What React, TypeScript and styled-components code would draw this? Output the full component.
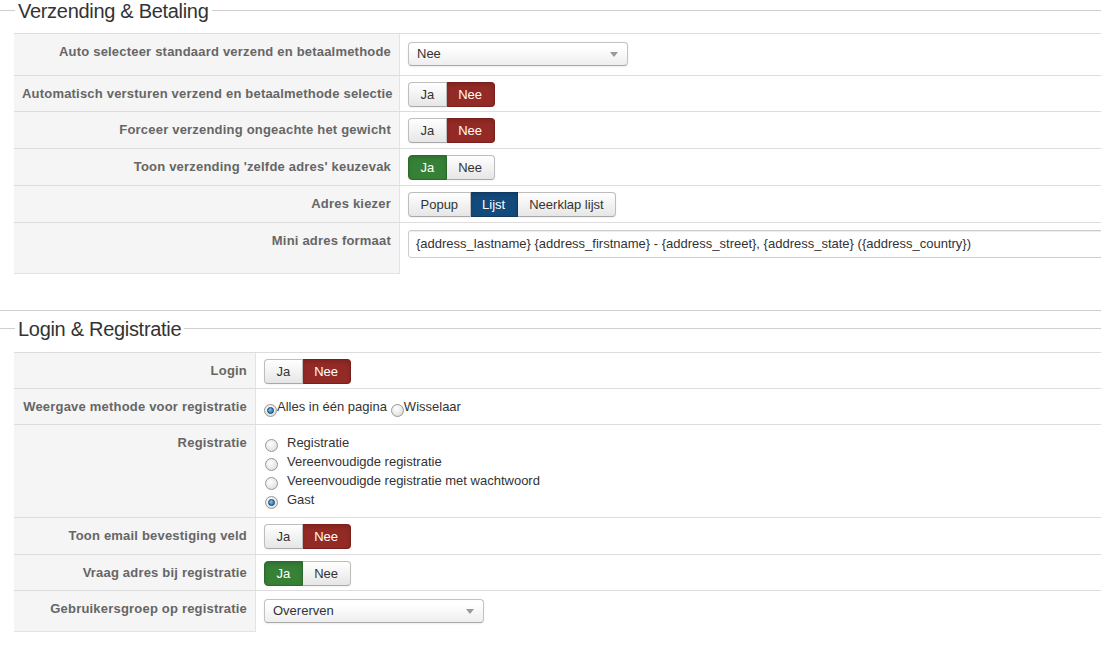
import React from 'react'
import styled, { createGlobalStyle, css } from 'styled-components'

const GlobalStyle = createGlobalStyle`
  html, body {
    margin: 0;
    padding: 0;
    background: #fff;
    overflow: hidden;
  }
  body {
    font-family: "Liberation Sans", Arial, sans-serif;
    font-size: 13px;
    color: #333;
  }
`

type Tone = 'danger' | 'success' | 'primary'

type BtnOpt = { label: string; active?: boolean; tone?: Tone }

const toneColors: Record<Tone, { bg: string; border: string }> = {
  danger: { bg: '#942a25', border: '#7a201c' },
  success: { bg: '#378137', border: '#2b6a2b' },
  primary: { bg: '#134a7c', border: '#0d3a63' },
}

const Page = styled.div`
  width: 100%;
  overflow: hidden;
  padding-bottom: 40px;
`

const Section = styled.section<{ $first?: boolean }>`
  ${(p) =>
    !p.$first &&
    css`
      margin-top: 36px;
      border-top: 1px solid #cfcfcf;
      padding-top: 7px;
    `}
`

const Legend = styled.div`
  display: flex;
  align-items: flex-start;
  height: 22px;
  &::before {
    content: '';
    width: 15px;
    margin-top: 10px;
    border-top: 1px solid #cfcfcf;
  }
  &::after {
    content: '';
    flex: 1;
    margin-top: 10px;
    border-top: 1px solid #cfcfcf;
  }
`

const LegendText = styled.span`
  padding: 1px 3px 0;
  font-size: 20px;
  line-height: 20px;
  letter-spacing: -0.3px;
  color: #333;
  white-space: nowrap;
`

const Table = styled.div<{ $gap?: number }>`
  margin: ${(p) => p.$gap ?? 11}px 0 0 14px;
  width: 1200px;
`

const Label = styled.div<{ $w: number }>`
  width: ${(p) => p.$w}px;
  flex: none;
  box-sizing: border-box;
  padding: 8px 8px 0;
  background: #f5f5f5;
  border-right: 1px solid #e3e3e3;
  text-align: right;
  font-weight: bold;
  font-size: 13px;
  line-height: 20px;
  letter-spacing: 0.2px;
  color: #666;
  white-space: nowrap;
`

const Value = styled.div`
  flex: 1;
  padding: 0 8px;
  min-width: 0;
`

const Row = styled.div`
  display: flex;
  border-top: 1px solid #ddd;
  &:last-child ${Label} {
    border-bottom: 1px solid #e3e3e3;
  }
`

const BtnGroup = styled.div<{ $tight?: boolean }>`
  display: flex;
  margin: 6px 0 ${(p) => (p.$tight ? 4 : 5)}px;
`

const Btn = styled.span<{ $active?: boolean; $tone?: Tone }>`
  display: block;
  height: 25px;
  box-sizing: border-box;
  padding: 0 11.5px;
  line-height: 23px;
  font-size: 13px;
  color: #333;
  border: 1px solid #bdbdbd;
  border-bottom-color: #a8a8a8;
  border-left-width: 0;
  background: linear-gradient(#ffffff, #e6e6e6);
  box-shadow: inset 0 1px 0 rgba(255, 255, 255, 0.4), 0 1px 2px rgba(0, 0, 0, 0.05);
  &:first-child {
    border-left-width: 1px;
    border-radius: 4px 0 0 4px;
  }
  &:last-child {
    border-radius: 0 4px 4px 0;
  }
  ${(p) =>
    p.$active &&
    p.$tone &&
    css`
      color: #fff;
      background: ${toneColors[p.$tone].bg};
      border-color: ${toneColors[p.$tone].border};
      box-shadow: inset 0 2px 4px rgba(0, 0, 0, 0.15);
    `}
`

const Select = styled.div`
  position: relative;
  width: 220px;
  height: 24px;
  box-sizing: border-box;
  margin: 8px 0 9px;
  padding-left: 8px;
  border: 1px solid #c2c2c2;
  border-bottom-color: #a9a9a9;
  border-radius: 4px;
  background: linear-gradient(#ffffff 20%, #eeeeee);
  box-shadow: 0 1px 2px rgba(0, 0, 0, 0.08);
  line-height: 22px;
  font-size: 13px;
  color: #333;
`

const Caret = styled.span`
  position: absolute;
  right: 9px;
  top: 9px;
  width: 0;
  height: 0;
  border-left: 4px solid transparent;
  border-right: 4px solid transparent;
  border-top: 5px solid #999;
`

const TextInput = styled.div`
  width: 760px;
  height: 28px;
  box-sizing: border-box;
  margin: 7px 0 16px;
  padding: 0 7px;
  border: 1px solid #ccc;
  border-radius: 3px;
  box-shadow: inset 0 1px 1px rgba(0, 0, 0, 0.075);
  line-height: 26px;
  font-size: 13px;
  color: #333;
  white-space: nowrap;
`

const RadioDot = styled.span<{ $checked?: boolean }>`
  position: relative;
  display: inline-block;
  width: 11px;
  height: 11px;
  flex: none;
  border: 1px solid #979797;
  border-radius: 50%;
  background: radial-gradient(circle at 40% 35%, #ffffff, #d6d6d6);
  ${(p) =>
    p.$checked &&
    css`
      &::after {
        content: '';
        position: absolute;
        left: 2px;
        top: 2px;
        width: 5px;
        height: 5px;
        border-radius: 50%;
        border: 1px solid #173d5e;
        background: radial-gradient(circle at 40% 35%, #7cc6f0, #11639e);
      }
    `}
`

const RadioInline = styled.div`
  display: flex;
  align-items: center;
  padding: 8px 0 7px;
  line-height: 20px;
  font-size: 13px;
  color: #333;
`

const InlineItem = styled.label`
  display: inline-flex;
  align-items: center;
  & + & {
    margin-left: 4px;
  }
  ${RadioDot} {
    margin-top: 6px;
  }
`

const RadioList = styled.div`
  padding: 8px 0 8px;
`

const ListItem = styled.label`
  display: flex;
  align-items: center;
  height: 19px;
  line-height: 19px;
  font-size: 13px;
  color: #333;
  ${RadioDot} {
    margin: 5px 9px 0 1px;
  }
`

const Toggle = ({ options, tight }: { options: BtnOpt[]; tight?: boolean }) => (
  <BtnGroup $tight={tight}>
    {options.map((o, i) => (
      <Btn key={i} $active={o.active} $tone={o.tone}>
        {o.label}
      </Btn>
    ))}
  </BtnGroup>
)

const Dropdown = ({ value }: { value: string }) => (
  <Select>
    {value}
    <Caret />
  </Select>
)

const ja = (tone: Tone): BtnOpt[] => [
  { label: 'Ja', active: true, tone },
  { label: 'Nee' },
]
const nee = (): BtnOpt[] => [
  { label: 'Ja' },
  { label: 'Nee', active: true, tone: 'danger' },
]

const App = () => {
  const w1 = 386
  const w2 = 242

  return (
    <Page>
      <GlobalStyle />

      <Section $first>
        <Legend>
          <LegendText>Verzending &amp; Betaling</LegendText>
        </Legend>
        <Table>
          <Row>
            <Label $w={w1}>Auto selecteer standaard verzend en betaalmethode</Label>
            <Value>
              <Dropdown value="Nee" />
            </Value>
          </Row>
          <Row>
            <Label $w={w1}>Automatisch versturen verzend en betaalmethode selectie</Label>
            <Value>
              <Toggle options={nee()} tight />
            </Value>
          </Row>
          <Row>
            <Label $w={w1}>Forceer verzending ongeachte het gewicht</Label>
            <Value>
              <Toggle options={nee()} />
            </Value>
          </Row>
          <Row>
            <Label $w={w1}>Toon verzending 'zelfde adres' keuzevak</Label>
            <Value>
              <Toggle options={ja('success')} />
            </Value>
          </Row>
          <Row>
            <Label $w={w1}>Adres kiezer</Label>
            <Value>
              <Toggle
                options={[
                  { label: 'Popup' },
                  { label: 'Lijst', active: true, tone: 'primary' },
                  { label: 'Neerklap lijst' },
                ]}
              />
            </Value>
          </Row>
          <Row>
            <Label $w={w1}>Mini adres formaat</Label>
            <Value>
              <TextInput>
                {'{address_lastname} {address_firstname} - {address_street}, {address_state} ({address_country})'}
              </TextInput>
            </Value>
          </Row>
        </Table>
      </Section>

      <Section>
        <Legend>
          <LegendText>Login &amp; Registratie</LegendText>
        </Legend>
        <Table $gap={12}>
          <Row>
            <Label $w={w2}>Login</Label>
            <Value>
              <Toggle options={nee()} tight />
            </Value>
          </Row>
          <Row>
            <Label $w={w2}>Weergave methode voor registratie</Label>
            <Value>
              <RadioInline>
                <InlineItem>
                  <RadioDot $checked />
                  Alles in één pagina
                </InlineItem>
                <InlineItem>
                  <RadioDot />
                  Wisselaar
                </InlineItem>
              </RadioInline>
            </Value>
          </Row>
          <Row>
            <Label $w={w2}>Registratie</Label>
            <Value>
              <RadioList>
                {[
                  'Registratie',
                  'Vereenvoudigde registratie',
                  'Vereenvoudigde registratie met wachtwoord',
                  'Gast',
                ].map((t, i) => (
                  <ListItem key={t}>
                    <RadioDot $checked={i === 3} />
                    {t}
                  </ListItem>
                ))}
              </RadioList>
            </Value>
          </Row>
          <Row>
            <Label $w={w2}>Toon email bevestiging veld</Label>
            <Value>
              <Toggle options={nee()} />
            </Value>
          </Row>
          <Row>
            <Label $w={w2}>Vraag adres bij registratie</Label>
            <Value>
              <Toggle options={ja('success')} tight />
            </Value>
          </Row>
          <Row>
            <Label $w={w2}>Gebruikersgroep op registratie</Label>
            <Value>
              <Dropdown value="Overerven" />
            </Value>
          </Row>
        </Table>
      </Section>
    </Page>
  )
}

export default App
